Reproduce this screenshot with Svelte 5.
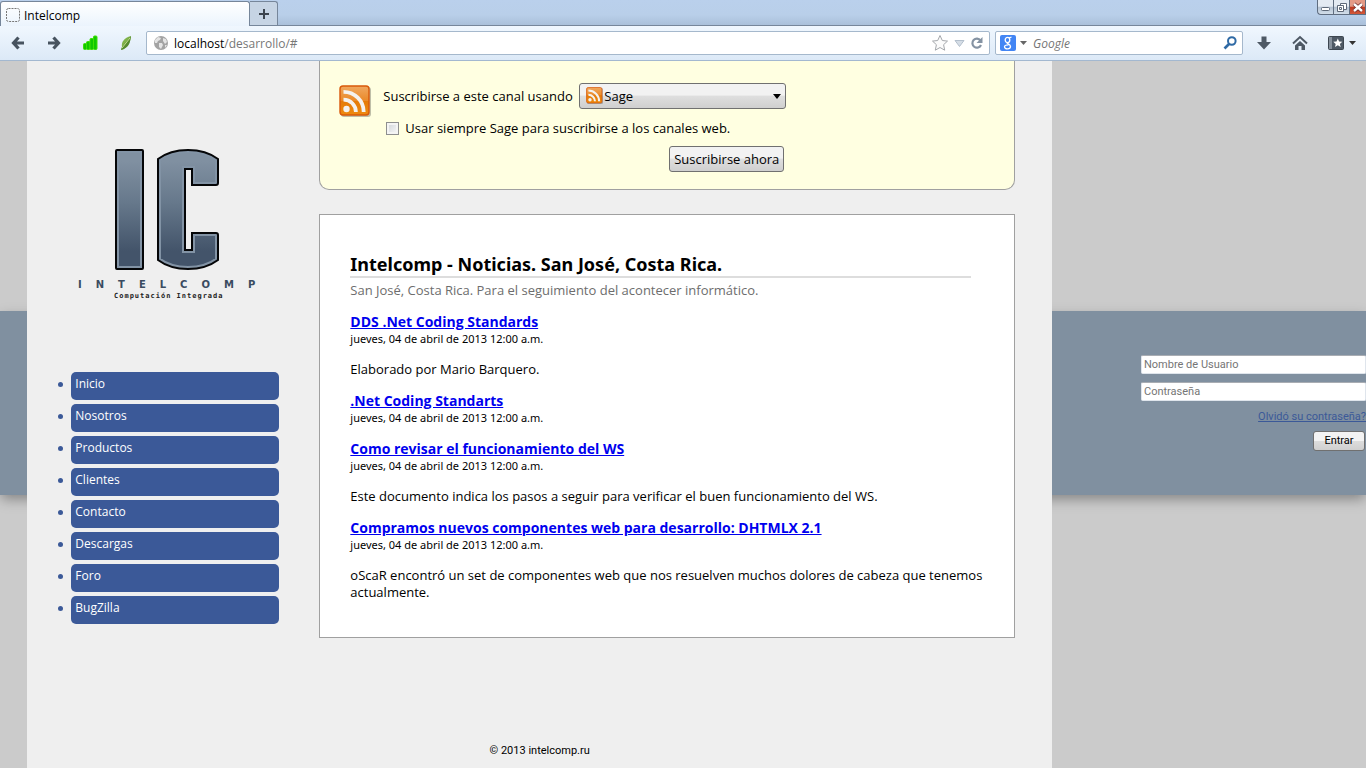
<script>
  const menu = ['Inicio', 'Nosotros', 'Productos', 'Clientes', 'Contacto', 'Descargas', 'Foro', 'BugZilla'];
  const date = 'jueves, 04 de abril de 2013 12:00 a.m.';
  const news = [
    { title: 'DDS .Net Coding Standards', body: 'Elaborado por Mario Barquero.' },
    { title: '.Net Coding Standarts', body: '' },
    {
      title: 'Como revisar el funcionamiento del WS',
      body: 'Este documento indica los pasos a seguir para verificar el buen funcionamiento del WS.'
    },
    {
      title: 'Compramos nuevos componentes web para desarrollo: DHTMLX 2.1',
      body: 'oScaR encontró un set de componentes web que nos resuelven muchos dolores de cabeza que tenemos actualmente.'
    }
  ];
</script>

{#snippet rss(size)}
  <svg width={size} height={size} viewBox="0 0 32 32" aria-hidden="true">
    <defs>
      <linearGradient id="rss{size}" x1="0" y1="0" x2="0" y2="1">
        <stop offset="0" stop-color="#f0a860" />
        <stop offset="0.5" stop-color="#ea8a2a" />
        <stop offset="0.52" stop-color="#e57b08" />
        <stop offset="1" stop-color="#ee8a10" />
      </linearGradient>
    </defs>
    <rect x="2" y="2" width="30" height="30" rx="3" fill="#000" opacity="0.25" />
    <rect x="1" y="1" width="29" height="29" rx="3" fill="url(#rss{size})" stroke="#d9590a" stroke-width="1.4" />
    <circle cx="7.5" cy="24" r="3.2" fill="#f4f2f0" />
    <path d="M4.5 14.6a12.4 12.4 0 0 1 12.4 12.4M4.5 6.8a20.2 20.2 0 0 1 20.2 20.2" fill="none" stroke="#f4f2f0" stroke-width="3.8" />
  </svg>
{/snippet}

<div class="window">
  <header class="chrome">
    <div class="tabs">
      <div class="tab">
        <svg width="16" height="16" viewBox="0 0 16 16" aria-hidden="true">
          <rect x="1.5" y="1.5" width="13" height="13" rx="2" fill="none" stroke="#777" stroke-dasharray="2 1" />
        </svg>
        <span>Intelcomp</span>
      </div>
      <button class="new-tab" aria-label="Nueva pestaña">
        <svg width="12" height="12" viewBox="0 0 12 12"><path d="M6 1v10M1 6h10" stroke="#3c444e" stroke-width="2" /></svg>
      </button>
      <div class="window-buttons">
        <button aria-label="Minimizar">
          <svg width="16" height="13" viewBox="0 0 16 13"><rect x="3.5" y="6.5" width="8" height="3" rx="1" fill="#fff" stroke="#5d6878" /></svg>
        </button>
        <button aria-label="Restaurar">
          <svg width="16" height="13" viewBox="0 0 16 13" fill="#fff" stroke="#5d6878">
            <path d="M6.500 2.500h6v6h-6z" /><path d="M3.500 4.500h6v6h-6z" /><path d="M5.500 6.500h2v2h-2z" />
          </svg>
        </button>
        <button class="close" aria-label="Cerrar">
          <svg width="16" height="13" viewBox="0 0 16 13">
            <path d="M4 3l8 7M12 3l-8 7" stroke="#6a2a2a" stroke-width="4" /><path d="M4 3l8 7M12 3l-8 7" stroke="#fff" stroke-width="2.500" />
          </svg>
        </button>
      </div>
    </div>

    <div class="toolbar">
      <button class="tool" aria-label="Atrás">
        <svg width="16" height="16" viewBox="0 0 16 16"><path d="M14 8H4M8.500 2.500L3.500 8l5 5.500" fill="none" stroke="#47535f" stroke-width="3.200" /></svg>
      </button>
      <button class="tool" aria-label="Adelante">
        <svg width="16" height="16" viewBox="0 0 16 16"><path d="M2 8h10M7.500 2.500l5 5.500l-5 5.500" fill="none" stroke="#47535f" stroke-width="3.200" /></svg>
      </button>
      <button class="tool" aria-label="Señal">
        <svg width="16" height="16" viewBox="0 0 16 16" fill="#10c800" stroke="#3ee000">
          <rect x="1.500" y="8.500" width="3" height="6" rx="1" /><rect x="4.500" y="6.500" width="3.500" height="8" rx="1" />
          <rect x="8" y="3.500" width="3.500" height="11" rx="1" /><rect x="11.500" y="1" width="3.500" height="13.500" rx="1" />
        </svg>
      </button>
      <button class="tool" aria-label="Sage">
        <svg width="16" height="16" viewBox="0 0 16 16">
          <path d="M13 1C6 3 3 7 4 12l-1 3C10 13 12 9 13 1z" fill="#7fb24a" /><path d="M13 1L4 12l-1 3C10 13 12 9 13 1z" fill="#568a30" />
          <path d="M12 3L4 13" stroke="#c4e08e" />
        </svg>
      </button>

      <div class="field address">
        <svg width="16" height="16" viewBox="0 0 16 16" aria-hidden="true">
          <circle cx="8" cy="8" r="7" fill="#a3a3a3" />
          <path d="M2 5l3-3 3 1-1 2-2 1-1 2-2 0zM6 8l3 0 1 2-2 4-2-2zM10 3l3 1 1 3-2 2-2-3zM12 10l2 0-2 3z" fill="#e4e4e4" />
        </svg>
        <span class="url"><span class="host">localhost</span>/desarrollo/#</span>
        <svg width="18" height="18" viewBox="0 0 18 18" aria-hidden="true">
          <path d="M9 1.500l2.300 5 5.200.600-3.900 3.600 1.100 5.500L9 13.500l-4.700 2.700 1.100-5.500L1.500 7.100l5.200-.600z" fill="#fbfbfb" stroke="#a5a8ac" />
        </svg>
        <svg width="11" height="9" viewBox="0 0 11 9" aria-hidden="true"><path d="M1 1.500h9L5.500 7.500z" fill="#d5dde6" stroke="#b3bfcc" /></svg>
        <svg width="14" height="14" viewBox="0 0 14 14" aria-hidden="true">
          <path d="M10.500 4.500A4.500 4.500 0 1 0 11 9" fill="none" stroke="#8593a3" stroke-width="2.200" /><path d="M12.500 1v6H6.500z" fill="#8593a3" />
        </svg>
      </div>

      <div class="field search">
        <svg width="16" height="16" viewBox="0 0 16 16" aria-hidden="true">
          <rect width="16" height="16" rx="2" fill="#4285f4" />
          <g fill="none" stroke="#fff" stroke-width="1.300">
            <ellipse cx="7.500" cy="5" rx="2.300" ry="2.600" /><path d="M9 3l2.500-1" /><path d="M7.500 7.600c-1.500 1 2.900 1.400 3 3.600 0 3.600-6 3.400-6 .600 0-1.800 2-2 4-2" />
          </g>
        </svg>
        <svg width="7" height="4" viewBox="0 0 7 4" aria-hidden="true"><path d="M0 0h7L3.500 4z" fill="#666" /></svg>
        <input type="text" placeholder="Google" aria-label="Buscar con Google" />
        <svg width="14" height="14" viewBox="0 0 14 14" aria-hidden="true">
          <circle cx="8.800" cy="5" r="3.800" fill="none" stroke="#2f6aa5" stroke-width="2" /><path d="M6 8L1.500 12.500" stroke="#2f6aa5" stroke-width="2.600" />
        </svg>
      </div>

      <button class="tool" aria-label="Descargas del navegador">
        <svg width="16" height="16" viewBox="0 0 16 16"><path d="M5.500 1.500h5V7H15l-7 7.500L1 7h4.500z" fill="#4e5965" /></svg>
      </button>
      <button class="tool" aria-label="Página de inicio">
        <svg width="16" height="16" viewBox="0 0 16 16">
          <path d="M1 8.500L8 2l7 6.500" fill="none" stroke="#4e5965" stroke-width="2" /><path d="M3 10.500l5-4.600 5 4.600V15H9.500v-4h-3v4H3z" fill="#4e5965" />
        </svg>
      </button>
      <button class="tool bookmarks" aria-label="Marcadores">
        <svg width="16" height="16" viewBox="0 0 16 16">
          <rect x="0.500" y="1.500" width="15" height="13" rx="1" fill="#4e5965" stroke="#3d4650" /><rect x="1" y="2" width="3" height="12" fill="#87919c" />
          <path d="M9.800 3.500l1.300 3 3.200.300-2.400 2.100.8 3.100-2.900-1.700-2.800 1.700.7-3.100-2.400-2.100 3.200-.300z" fill="#fff" />
        </svg>
        <svg width="7" height="4" viewBox="0 0 7 4"><path d="M0 0h7L3.500 4z" fill="#333" /></svg>
      </button>
    </div>
  </header>

  <div class="page">
    <section class="band">
      <form class="login">
        <input type="text" placeholder="Nombre de Usuario" aria-label="Nombre de Usuario" />
        <input type="password" placeholder="Contraseña" aria-label="Contraseña" />
        <a href="#recuperar">Olvidó su contraseña?</a>
        <button type="button">Entrar</button>
      </form>
    </section>

    <div class="wrapper">
      <aside>
        <svg class="logo" width="200" height="152" viewBox="0 0 200 152" role="img" aria-label="Intelcomp, Computación Integrada">
          <defs>
            <linearGradient id="steel" x1="0" y1="0" x2="0" y2="120" gradientUnits="userSpaceOnUse">
              <stop offset="0.1" stop-color="#8090a1" />
              <stop offset="0.45" stop-color="#66788b" />
              <stop offset="0.85" stop-color="#43546a" />
            </linearGradient>
            <clipPath id="shapeI"><rect x="39" y="1" width="27" height="119" rx="1" /></clipPath>
            <clipPath id="shapeC">
              <path d="M81 10Q93 1 111 1T141 10V34Q141 36 139 36H115V20H108V101H115V84H139Q141 84 141 86V111Q129 120 111 120T81 111Z" />
            </clipPath>
          </defs>
          <rect x="39" y="1" width="27" height="119" rx="1" fill="url(#steel)" />
          <rect x="39" y="1" width="27" height="119" rx="1" fill="none" stroke="#8293a5" stroke-width="6" clip-path="url(#shapeI)" />
          <rect x="39" y="1" width="27" height="119" rx="1" fill="none" stroke="#050608" stroke-width="2" />
          <path d="M81 10Q93 1 111 1T141 10V34Q141 36 139 36H115V20H108V101H115V84H139Q141 84 141 86V111Q129 120 111 120T81 111Z" fill="url(#steel)" />
          <path d="M81 10Q93 1 111 1T141 10V34Q141 36 139 36H115V20H108V101H115V84H139Q141 84 141 86V111Q129 120 111 120T81 111Z" fill="none" stroke="#8293a5" stroke-width="6" clip-path="url(#shapeC)" />
          <path d="M81 10Q93 1 111 1T141 10V34Q141 36 139 36H115V20H108V101H115V84H139Q141 84 141 86V111Q129 120 111 120T81 111Z" fill="none" stroke="#050608" stroke-width="2" />
          <text class="brand" x="1" y="139">INTELCOMP</text>
          <text class="motto" x="37" y="149">Computación Integrada</text>
        </svg>
        <nav>
          <ul>
            {#each menu as item}
              <li><a href="#{item}">{item}</a></li>
            {/each}
          </ul>
        </nav>
      </aside>

      <main>
        <section class="subscribe">
          {@render rss(32)}
          <div class="options">
            <div class="row">
              <label for="reader">Suscribirse a este canal usando</label>
              <span class="picker">
                <select id="reader"><option>Sage</option></select>
                <span class="picker-icon">{@render rss(17)}</span>
                <svg class="arrow" width="8" height="5" viewBox="0 0 8 5" aria-hidden="true"><path d="M0 0h8L4 5z" /></svg>
              </span>
            </div>
            <label class="always">
              <input type="checkbox" />
              <span>Usar siempre Sage para suscribirse a los canales web.</span>
            </label>
            <button class="subscribe-now">Suscribirse ahora</button>
          </div>
        </section>

        <section class="feed">
          <h1>Intelcomp - Noticias. San José, Costa Rica.</h1>
          <p class="about">San José, Costa Rica. Para el seguimiento del acontecer informático.</p>
          {#each news as item}
            <article>
              <h2><a href="#noticia">{item.title}</a></h2>
              <time>{date}</time>
              {#if item.body}<p>{item.body}</p>{/if}
            </article>
          {/each}
        </section>
      </main>

      <footer>© 2013 intelcomp.ru</footer>
    </div>
  </div>
</div>

<style>
  :global(body) { margin: 0; }
  .window {
    display: flex;
    flex-direction: column;
    min-height: 100vh;
    font-family: "Open Sans", "Noto Sans", sans-serif;
    font-size: 13px;
    color: #000;
    background: #cbcbcb;
  }
  .window :global(*) { box-sizing: border-box; }
  button, input, select { font: inherit; color: inherit; }
  svg { display: block; flex: none; }

  .chrome { font-size: 12px; border-bottom: 1px solid #a3b8d0; }
  .tabs {
    display: flex;
    align-items: flex-end;
    height: 26px;
    background: linear-gradient(#bad0ec, #b9cfe9 60%, #aac0da);
    border-bottom: 1px solid #76869a;
  }
  .tab {
    display: flex;
    align-items: center;
    gap: 3px;
    width: 250px;
    height: 25px;
    margin-bottom: -1px;
    padding: 2px 4px 0;
    background: linear-gradient(#fff, #ebf4fd);
    border: 1px solid #76869a;
    border-bottom: 0;
    border-radius: 3px 3px 0 0;
  }
  .new-tab {
    display: grid;
    place-items: center;
    width: 28px;
    height: 24px;
    padding: 0;
    background: #c6d4e4;
    border: 1px solid #76869a;
    border-left: 0;
    border-bottom: 0;
    border-radius: 0 3px 0 0;
  }
  .window-buttons { display: flex; align-self: flex-start; margin-left: auto; }
  .window-buttons button {
    width: 16px;
    height: 15px;
    padding: 0;
    background: linear-gradient(#e3eaf2 45%, #b4c2d2 50%, #d2deea);
    border: 1px solid #5f6d80;
    border-top: 0;
    border-right: 0;
  }
  .window-buttons button:first-child { border-radius: 0 0 0 4px; }
  .window-buttons .close { width: 17px; background: linear-gradient(#e49a86 45%, #bd3a20 50%, #d2583a); border-right: 1px solid #5f6d80; }

  .toolbar {
    display: flex;
    align-items: center;
    gap: 5px;
    height: 34px;
    padding: 0 6px 0 2px;
    background: linear-gradient(#f0f7fe, #dce9f7);
  }
  .tool {
    display: flex;
    align-items: center;
    justify-content: center;
    gap: 5px;
    width: 31px;
    height: 24px;
    padding: 0;
    background: none;
    border: 0;
  }
  .bookmarks { width: 36px; margin-left: 4px; }
  .field {
    display: flex;
    align-items: center;
    height: 24px;
    background: #fff;
    border: 1px solid #a5b8cc;
    border-radius: 2px;
  }
  .address { flex: 1; gap: 5px; padding: 0 5px 0 6px; min-width: 0; }
  .url { flex: 1; color: #777; }
  .host { color: #000; }
  .search { width: 248px; gap: 4px; padding: 0 5px 0 4px; }
  .search input { flex: 1; min-width: 0; padding: 0 0 0 2px; border: 0; background: none; font-style: italic; }
  .search input::placeholder { color: #757575; }

  .page {
    flex: 1;
    display: grid;
    grid-template-columns: 2% minmax(0, 1025fr) minmax(0, 314fr);
    grid-template-rows: 250px 184px 1fr;
  }
  .band {
    grid-column: 1 / -1;
    grid-row: 2;
    display: flex;
    justify-content: flex-end;
    padding-top: 44px;
    background: #8090a0;
    box-shadow: 0 5px 12px -1px rgba(0, 0, 0, 0.35);
    clip-path: inset(-12px 0 -24px 0);
  }
  .login { display: flex; flex-direction: column; align-items: flex-end; width: 225px; font-family: Roboto, "Open Sans", sans-serif; font-size: 11px; }
  .login input {
    width: 100%;
    height: 19px;
    margin-bottom: 8px;
    padding: 0 2px;
    background: #fff;
    border: 1px solid #dfe5ec;
    border-top-color: #a9adb3;
    border-radius: 2px;
  }
  .login input::placeholder { color: #757575; }
  .login a { color: #3b5998; line-height: 15px; }
  .login button {
    height: 20px;
    margin: 7px 1px 0;
    width: 52px;
    padding: 0;
    line-height: 16px;
    background: linear-gradient(#f3f3f3 48%, #dcdcdc 52%, #cfcfcf);
    border: 1px solid #707070;
    border-radius: 3px;
  }

  .wrapper {
    grid-column: 2;
    grid-row: 1 / -1;
    z-index: 1;
    display: grid;
    grid-template-columns: 252px minmax(0, 1fr);
    grid-template-rows: 1fr auto;
    column-gap: 40px;
    padding-right: 37px;
    background: #efefef;
  }
  aside { padding: 88px 0 0 31px; }
  .logo { margin-left: 19px; }
  .brand { font: bold 10px "DejaVu Sans", sans-serif; letter-spacing: 14px; fill: #3a4b60; }
  .motto { font: bold 7px "DejaVu Sans Mono", monospace; letter-spacing: 1px; fill: #222; }
  ul { display: flex; flex-direction: column; gap: 4px; margin: 71px 0 0; padding: 0; list-style: none; }
  li { display: flex; gap: 8px; }
  li::before { content: ""; width: 5px; height: 5px; margin-top: 10px; border-radius: 50%; background: #3b5998; }
  li a {
    flex: 1;
    height: 28px;
    padding-left: 4px;
    font-size: 12px;
    line-height: 24px;
    color: #fff;
    text-decoration: none;
    background: #3b5998;
    border-radius: 5px;
  }

  main { display: flex; flex-direction: column; gap: 24px; padding-bottom: 24px; }
  .subscribe {
    display: flex;
    align-items: flex-start;
    gap: 12px;
    padding: 22px 19px 17px;
    background: #ffffe1;
    border: 1px solid #a0a0a0;
    border-top: 0;
    border-radius: 0 0 10px 10px;
  }
  .subscribe > :global(svg) { margin-top: 2px; }
  .options { display: flex; flex-direction: column; width: 403px; }
  .row { display: flex; align-items: center; justify-content: space-between; }
  .picker { position: relative; width: 207px; }
  .picker select {
    display: block;
    width: 100%;
    height: 26px;
    padding: 0 24px;
    appearance: none;
    background: linear-gradient(#f2f2f2 45%, #dedede 52%, #cfcfcf);
    border: 1px solid #707070;
    border-radius: 3px;
  }
  .picker-icon { position: absolute; left: 7px; top: 4px; pointer-events: none; }
  .arrow { position: absolute; right: 5px; top: 11px; pointer-events: none; }
  .always { display: flex; align-items: center; gap: 6px; margin: 10px 0 0 3px; line-height: 18px; }
  .always input {
    appearance: none;
    width: 13px;
    height: 13px;
    margin: 0;
    background: linear-gradient(135deg, #cfd3d8, #fafafa);
    border: 1px solid #8e8f8f;
    box-shadow: inset 0 0 0 2px #f4f4f4;
  }
  .subscribe-now {
    align-self: flex-end;
    height: 26px;
    margin: 9px 2px 0 0;
    padding: 0 4px;
    background: linear-gradient(#f2f2f2 45%, #dedede 52%, #cfcfcf);
    border: 1px solid #707070;
    border-radius: 3px;
  }

  .feed { padding: 38px 30px 36px; background: #fff; border: 1px solid #a0a0a0; line-height: 17px; }
  h1 { margin: 0 13px 4px 0; padding-bottom: 1px; font-family: "Noto Sans", sans-serif; font-size: 18px; line-height: 22px; border-bottom: 2px solid #ddd; }
  p { margin: 14px 0 0; }
  .about { margin: 0; color: #6d6d6d; }
  article { margin-top: 14px; }
  h2 { margin: 0; font-size: 14px; }
  h2 a { color: #0000ee; }
  time { display: block; font-family: "Noto Sans", sans-serif; font-size: 11px; }
  footer { grid-column: 1 / -1; margin-right: -37px; padding-bottom: 9px; text-align: center; font-family: Roboto, "Open Sans", sans-serif; font-size: 11px; line-height: 16px; }
</style>
